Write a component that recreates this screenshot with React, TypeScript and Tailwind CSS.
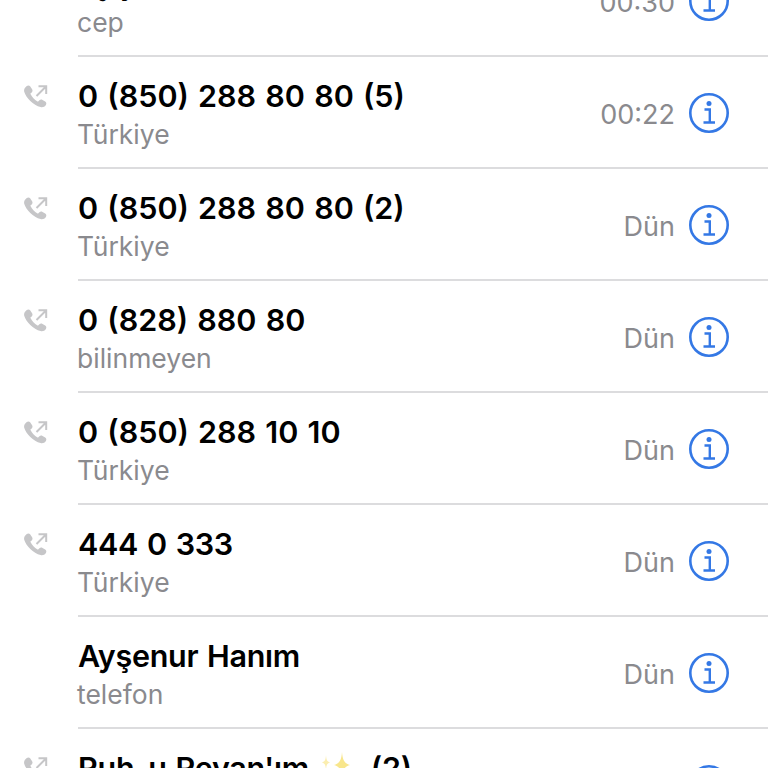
const calls = [
  { title: "Ayşe", sub: "cep", time: "00:30", out: false, tight: "tracking-[-0.3px]" },
  { title: "0 (850) 288 80 80 (5)", sub: "Türkiye", time: "00:22", out: true, tight: "" },
  { title: "0 (850) 288 80 80 (2)", sub: "Türkiye", time: "Dün", out: true, tight: "" },
  { title: "0 (828) 880 80", sub: "bilinmeyen", time: "Dün", out: true, tight: "" },
  { title: "0 (850) 288 10 10", sub: "Türkiye", time: "Dün", out: true, tight: "" },
  { title: "444 0 333", sub: "Türkiye", time: "Dün", out: true, tight: "tracking-[-0.3px]" },
  { title: "Ayşenur Hanım", sub: "telefon", time: "Dün", out: false, tight: "tracking-[-0.3px]" },
  { title: "Ruh-u Revan'ım", sparkle: true, suffix: "(2)", sub: "cep", time: "Dün", out: true, tight: "tracking-[-0.3px]" },
];

function OutgoingIcon() {
  return (
    <svg width="26" height="26" viewBox="0 0 26 26" className="block">
      <path
        d="M3.800 2c1.200-.9 2.700-.6 3.500.6l1.800 2.700c.7 1 .5 2.300-.4 3.100l-1 .9c-.3.200-.3.500-.2.800 1.600 3.200 3.900 5.600 7 7.300.3.200.7.100.9-.1l1-1c.8-.9 2.100-1.100 3.100-.4l2.700 1.700c1.200.7 1.500 2.300.7 3.400-1.200 1.800-3.300 2.700-5.300 2.100C10.300 21.200 3 13.900 1.200 7.700.6 5.500 1.900 3.300 3.800 2z"
        fill="#c6c6c8"
      />
      <path d="M13.500 12 22.500 3M15.500 2.300h7.700v7.700" fill="none" stroke="#c6c6c8" strokeWidth="2" />
    </svg>
  );
}

function InfoIcon() {
  return (
    <svg width="40" height="40" viewBox="0 0 40 40" className="block">
      <circle cx="20" cy="20" r="18.700" fill="none" stroke="#3478e5" strokeWidth="2.600" />
      <circle cx="20" cy="10.600" r="2.500" fill="#3478e5" />
      <path d="M15.500 16.500h5.300v13M14.500 29.500h11.500" fill="none" stroke="#3478e5" strokeWidth="2.400" />
    </svg>
  );
}

function Sparkles() {
  return (
    <svg width="28" height="34" viewBox="0 0 28 34" className="mr-[21px] ml-[13px] inline-block shrink-0">
      <path d="M4 4c.4 5 1 6.500 4 7.500-3 1-3.600 2.500-4 7.500-.4-5-1-6.500-4-7.500 3-1 3.600-2.500 4-7.500z" fill="#fbeeb0" />
      <path d="M20 1c.7 8 2 11 8 13-6 2-7.300 5-8 13-.7-8-2-11-8-13 6-2 7.300-5 8-13z" fill="#f8e68c" />
    </svg>
  );
}

type Call = { title: string; sub: string; time: string; out: boolean; tight: string; sparkle?: boolean; suffix?: string };

function Row({ title, sub, time, out, tight, sparkle, suffix }: Call) {
  return (
    <div className="flex h-[112px] shrink-0">
      <div className="w-[78px] shrink-0 pl-[23px] pt-[27px]">{out && <OutgoingIcon />}</div>
      <div className="flex min-w-0 flex-1 items-center border-b-2 border-[#dcdcde] pr-[39px]">
        <div className="min-w-0 flex-1 pt-[5px]">
          <div
            className={`flex h-[38px] items-center text-[30.5px] leading-[38px] font-semibold [word-spacing:1.5px] whitespace-nowrap text-black ${tight}`}
          >
            {title}
            {sparkle && <Sparkles />}
            {suffix}
          </div>
          <div className="-ml-px text-[26.5px] leading-[38px] text-[#8a8a8e]">{sub}</div>
        </div>
        <div className="mr-[14px] pt-[7px] text-[27px] text-[#8a8a8e]">{time}</div>
        <div className="mt-[2px]">
          <InfoIcon />
        </div>
      </div>
    </div>
  );
}

export default function App() {
  return (
    <div className="h-[768px] w-[768px] overflow-hidden bg-white font-['Inter',sans-serif]">
      <div className="-mt-[55px] flex flex-col">
        {calls.map((c, i) => (
          <Row key={i} {...c} />
        ))}
      </div>
    </div>
  );
}
